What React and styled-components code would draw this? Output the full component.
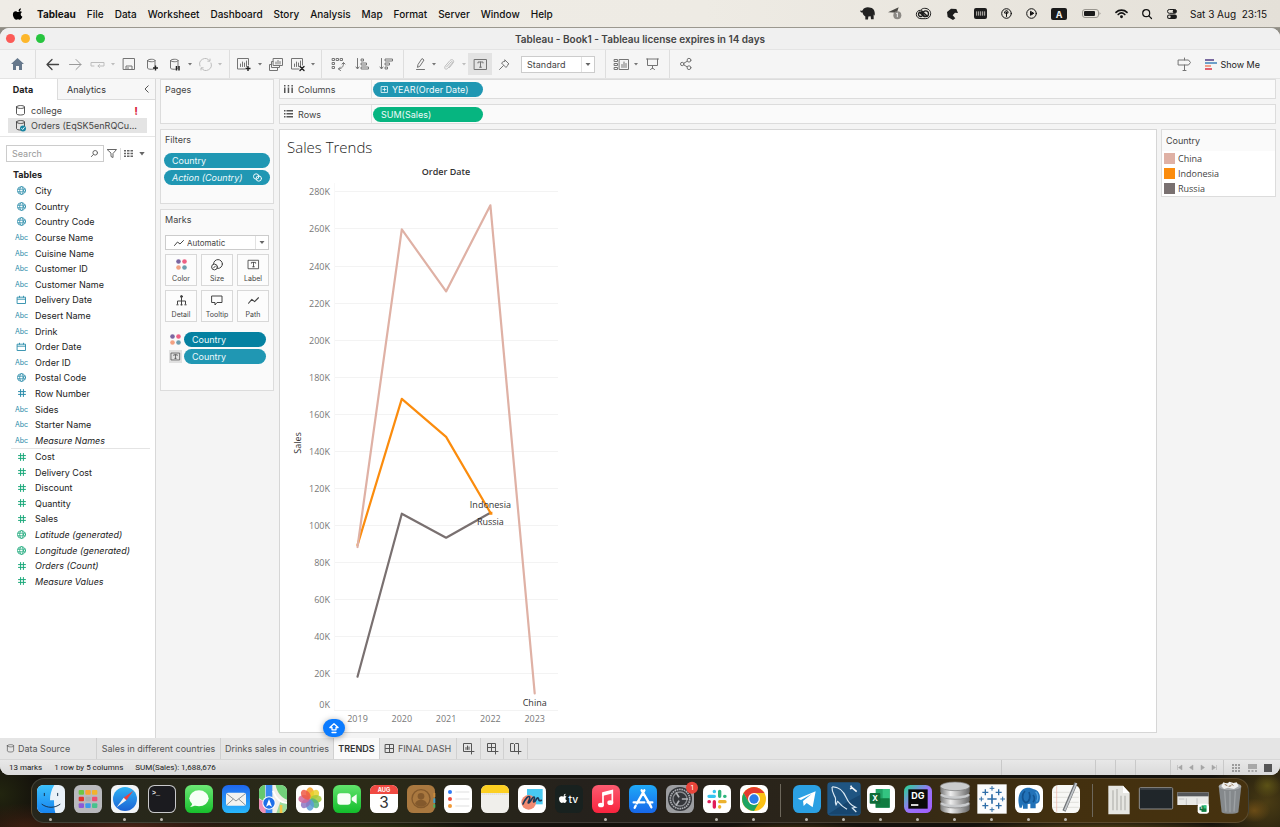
import React from "react";
import styled, { createGlobalStyle, css } from "styled-components";

const UI = `Inter, "Liberation Sans", sans-serif`;
const CHART = `"Open Sans", "Noto Sans", sans-serif`;

const GlobalStyle = createGlobalStyle`
  *, *::before, *::after { box-sizing: border-box; }
  body { margin: 0; font-family: ${UI}; font-size: 9px; color: #333; }
  button, input, select { font: inherit; color: inherit; }
  button { border: 0; padding: 0; background: none; cursor: pointer; }
  a { color: inherit; text-decoration: none; }
  ul { list-style: none; margin: 0; padding: 0; }
  h1, h2, h3 { margin: 0; font-size: inherit; font-weight: inherit; }
  svg { display: block; flex: none; overflow: visible; }
`;

/* ---------- desktop ---------- */

const Desktop = styled.div`
  display: flex;
  flex-direction: column;
  min-height: 100vh;
  background:
    linear-gradient(#8f8c84 0 60px, transparent 60px),
    radial-gradient(60px 24px at 2% 100%, #3a1e10, transparent),
    radial-gradient(40px 40px at 0% 96%, #22250f, transparent),
    radial-gradient(140px 14px at 10% 100%, #4a2416, transparent),
    radial-gradient(180px 16px at 26% 101%, #4a5a14, transparent),
    radial-gradient(90px 14px at 62% 101%, #5a4412, transparent),
    radial-gradient(160px 16px at 86% 101%, #7a5e18, transparent),
    radial-gradient(14px 12px at 99% 95%, #5c5216, transparent),
    radial-gradient(16px 12px at 98% 98%, #6b4c16, transparent),
    radial-gradient(60px 60px at 99% 97%, #4a3c14, transparent),
    #14110c;
`;

const MenuBar = styled.header`
  display: flex;
  align-items: center;
  height: 28px;
  padding: 0 13px 0 12px;
  background: linear-gradient(90deg, #efece6, #eeebe4 55%, #e4e0d8);
  border-bottom: 1px solid #9b988f;
  color: #111;
  font-size: 10px;
`;

const MenuList = styled.nav`
  display: flex;
  align-items: center;
  gap: 11px;
`;

const MenuItem = styled.button`
  font-family: ${UI};
  font-size: 10px;
  font-weight: ${(p) => (p.$bold ? 700 : 500)};
  white-space: nowrap;

  &:first-child { margin-right: 2px; }
`;

const StatusArea = styled.div`
  display: flex;
  align-items: center;
  margin-left: auto;
`;

const StatusSlot = styled.button`
  display: flex;
  justify-content: center;
  align-items: center;
  width: ${(p) => p.$w}px;
`;

const Clock = styled.time`
  margin-left: 6px;
  font-size: 10px;
  font-weight: 400;
  white-space: pre;
`;

const Window = styled.main`
  flex: 1;
  display: flex;
  flex-direction: column;
  background: #f4f4f4;
  border-radius: 9px;
  overflow: hidden;
`;

const TitleBar = styled.div`
  position: relative;
  display: flex;
  align-items: center;
  justify-content: center;
  height: 22px;
  background: #f0f0f0;
  border-bottom: 1px solid #e4e4e4;
`;

const Lights = styled.div`
  position: absolute;
  left: 6px;
  display: flex;
  gap: 6px;
`;

const Light = styled.button`
  width: 9px;
  height: 9px;
  border-radius: 50%;
  background: ${(p) => p.$c};
`;

const WindowTitle = styled.h1`
  font-size: 10px;
  line-height: 12px;
  font-weight: 600;
  color: #444;
`;

/* ---------- toolbar ---------- */

const Toolbar = styled.div`
  display: flex;
  height: 29px;
  background: #f5f5f5;
  border-bottom: 1px solid #e3e3e3;
`;

const ToolGroup = styled.div`
  display: flex;
  align-items: center;
  padding: 0 ${(p) => p.$pr || 0}px 0 ${(p) => p.$pl || 0}px;
  ${(p) => !p.$last && css`border-right: 1px solid #dedede;`}
`;

const ToolButton = styled.button`
  display: flex;
  align-items: center;
  justify-content: center;
  width: ${(p) => p.$w || 24}px;
  height: 22px;
  color: ${(p) => (p.$off ? "#bdbdbd" : "#747474")};
  background: ${(p) => (p.$on ? "#e3e3e3" : "transparent")};
`;

const ToolEnd = styled.div`
  display: flex;
  align-items: center;
  margin-left: auto;
  padding-right: 20px;
`;

const ShowMe = styled.button`
  display: flex;
  align-items: center;
  gap: 3px;
  margin-left: 9px;
  color: #222;
  font-size: 9px;
`;

const SelectBox = styled.label`
  display: flex;
  align-items: center;
  position: relative;
  width: ${(p) => p.$w};
  height: ${(p) => p.$h}px;
  margin-left: ${(p) => p.$ml || 0}px;
  background: #fff;
  border: 1px solid #ccc;
  color: #444;

  select {
    flex: 1;
    min-width: 0;
    height: 100%;
    padding: 0 0 0 ${(p) => p.$pad}px;
    border: 0;
    outline: 0;
    background: transparent;
    appearance: none;
    font-size: ${(p) => p.$fs}px;
  }
  > svg:last-child {
    padding: 0 3px;
    width: 13px;
    height: 100%;
    border-left: 1px solid #e2e2e2;
    pointer-events: none;
  }
  > svg:first-child {
    margin-left: 8px;
  }
`;

/* ---------- work area ---------- */

const Body = styled.div`
  flex: 1;
  display: flex;
`;

const DataPane = styled.aside`
  width: 156px;
  flex: none;
  background: #fff;
  border-right: 1px solid #d8d8d8;
`;

const PaneTabs = styled.div`
  display: flex;
  height: 21px;
`;

const PaneTab = styled.button`
  font-size: 9px;
  width: ${(p) => p.$w}px;
  color: #333;
  ${(p) =>
    p.$active
      ? css`font-weight: 700; color: #222; padding-right: 11px;`
      : css`background: #f7f7f7; border-bottom: 1px solid #dcdcdc;`}
  ${(p) => p.$first && css`border-left: 1px solid #dcdcdc;`}
`;

const SourceList = styled.ul`
  padding: 3px 8px 3px;
  border-bottom: 1px solid #e6e6e6;
`;

const Source = styled.li`
  display: flex;
  align-items: center;
  gap: 6px;
  height: 15px;
  padding-left: 8px;
  font-size: 9px;
  color: #444;
  background: ${(p) => (p.$active ? "#e4e4e4" : "transparent")};

  b {
    margin-left: auto;
    padding-right: 9px;
    color: #d8203a;
    font-size: 11px;
  }
`;

const SearchRow = styled.div`
  display: flex;
  align-items: center;
  gap: 4px;
  padding: 8px 8px 0 6px;
  color: #666;
`;

const SearchBox = styled.label`
  display: flex;
  align-items: center;
  width: 98px;
  height: 17px;
  padding: 0 5px;
  border: 1px solid #ccc;

  input {
    flex: 1;
    min-width: 0;
    padding: 0;
    border: 0;
    outline: 0;
    background: none;
    font-size: 9px;
  }
  input::placeholder { color: #999; }
`;

const IconButton = styled.button`
  display: flex;
  align-items: center;
  justify-content: center;
  width: ${(p) => p.$w || 16}px;
  height: 12px;
  ${(p) => p.$div && css`border-left: 1px solid #ddd; padding-left: 3px;`}
`;

const PaneHeading = styled.h2`
  margin: 7px 0 3px 13px;
  line-height: 11px;
  font-size: 9px;
  font-weight: 700;
  color: #222;
`;

const FieldList = styled.ul`
  display: grid;
  grid-auto-rows: 1fr;
  height: ${(p) => p.$h}px;
  margin: 0 5px 0 11px;
  ${(p) => p.$ruled && css`border-top: 1px solid #e4e4e4;`}
`;

const Field = styled.li`
  display: grid;
  grid-template-columns: 21px 1fr;
  align-items: center;
  column-gap: 3px;
  font-size: 9px;
  color: #222;
  font-style: ${(p) => (p.$calc ? "italic" : "normal")};
  white-space: nowrap;
`;

const FieldIcon = styled.span`
  display: flex;
  justify-content: center;
  font-size: 7px;
  font-style: normal;
  color: ${(p) => (p.$measure ? "#1aa87a" : "#2a8caa")};
`;

const CardColumn = styled.div`
  display: flex;
  flex-direction: column;
  gap: 5px;
  width: 114px;
  margin: 0 5px 0 4px;
  flex: none;
`;

const Card = styled.section`
  min-height: ${(p) => p.$h}px;
  padding: 4px 3px;
  background: #fafafa;
  border: 1px solid #dcdcdc;
`;

const CardTitle = styled.h2`
  padding-left: 1px;
  line-height: 12px;
  font-size: 9px;
  color: #444;
`;

const Pill = styled.button`
  display: flex;
  align-items: center;
  justify-content: space-between;
  height: 15px;
  width: ${(p) => p.$w || "100%"};
  padding: 0 8px;
  border-radius: 8px;
  background: ${(p) => p.$bg || "#2097b3"};
  color: #eef9fb;
  font-size: 9px;
  font-style: ${(p) => (p.$calc ? "italic" : "normal")};
  white-space: nowrap;
`;

const FilterStack = styled.div`
  display: grid;
  gap: 2px;
  margin-top: 7px;
`;

const MarksBody = styled.div`
  padding: 9px 1px 0;
`;

const MarkGrid = styled.div`
  display: grid;
  grid-template-columns: repeat(3, 1fr);
  gap: 4px;
  margin: 4px 0 10px;
`;

const MarkButton = styled.button`
  display: flex;
  flex-direction: column;
  align-items: center;
  justify-content: space-between;
  height: 32px;
  padding: 4px 0 2px;
  background: #fcfcfc;
  border: 1px solid #d8d8d8;
  color: #444;
  font-size: 7px;
  line-height: 8px;
`;

const Encoding = styled.div`
  display: flex;
  align-items: center;
  gap: 2px;
  margin-bottom: 2px;
  padding: 0 3px 0 4px;
`;

const EncodingIcon = styled.span`
  display: flex;
  align-items: center;
  justify-content: center;
  width: 13px;
  height: 13px;
  flex: none;
  background: ${(p) => (p.$boxed ? "#e0e0e0" : "transparent")};
  color: #444;
`;

const Sheet = styled.div`
  flex: 1;
  min-width: 0;
  display: flex;
  flex-direction: column;
  gap: 5px;
  padding: 0 4px 5px 0;
`;

const Shelf = styled.div`
  display: flex;
  align-items: center;
  height: 20px;
  flex: none;
  background: #fafafa;
  border: 1px solid #dcdcdc;
`;

const ShelfName = styled.div`
  display: flex;
  align-items: center;
  gap: 5px;
  width: 92px;
  height: 100%;
  margin-right: 1px;
  padding-left: 4px;
  border-right: 1px solid #e2e2e2;
  color: #444;
  font-size: 9px;
`;

const PillText = styled.span`
  display: flex;
  align-items: center;
  gap: 4px;
`;

const Views = styled.div`
  flex: 1;
  display: flex;
  align-items: flex-start;
  gap: 4px;
`;

const Worksheet = styled.section`
  position: relative;
  align-self: stretch;
  flex: 1;
  padding: 7px 0 0 7px;
  background: #fff;
  border: 1px solid #d6d6d6;
`;

const SheetTitle = styled.h2`
  margin-bottom: 2px;
  line-height: 20px;
  font-family: ${CHART};
  font-size: 15px;
  font-weight: 300;
  color: #222;
`;

const ChartSvg = styled.svg`
  margin-left: -7px;
  font-family: ${CHART};
`;

const UploadBadge = styled.button`
  position: absolute;
  left: 43px;
  bottom: -5px;
  display: flex;
  align-items: center;
  justify-content: center;
  width: 22px;
  height: 18px;
  border-radius: 9px;
  background: #0a7bff;
  color: #fff;
  box-shadow: 0 1px 6px rgba(0, 0, 0, 0.35);
`;

const Legend = styled.section`
  width: 115px;
  background: #fff;
  border: 1px solid #dcdcdc;

  h2 {
    height: 21px;
    padding-left: 4px;
    line-height: 21px;
    background: #fafafa;
    font-size: 9px;
    color: #444;
  }
`;

const LegendItem = styled.li`
  display: flex;
  align-items: center;
  gap: 3px;
  height: 15px;
  padding-left: 2px;
  font-family: ${CHART};
  font-size: 9px;
  color: #444;

  &::before {
    content: "";
    width: 11px;
    height: 11px;
    background: ${(p) => p.$c};
  }
`;

/* ---------- bottom bars ---------- */

const SheetTabs = styled.nav`
  display: flex;
  height: 22px;
  background: #e5e5e5;
  border-bottom: 1px solid #d6d6d6;
`;

const SheetTab = styled.a`
  display: flex;
  align-items: center;
  justify-content: ${(p) => (p.$start ? "flex-start" : "center")};
  gap: 4px;
  width: ${(p) => p.$w}px;
  padding-left: ${(p) => (p.$start ? 7 : 0)}px;
  border-right: 1px solid #d0d0d0;
  background: ${(p) => (p.$active ? "#fafafa" : "transparent")};
  color: ${(p) => (p.$active ? "#333" : "#555")};
  font-weight: ${(p) => (p.$active ? 600 : 400)};
  font-size: 9px;
  white-space: nowrap;
`;

const StatusBar = styled.footer`
  display: flex;
  align-items: center;
  gap: 12px;
  height: 15px;
  padding-left: 9px;
  background: linear-gradient(#e8e8e8, #dadada);
  color: #222;
  font-family: Roboto, ${UI};
  font-size: 8px;
`;

const StatusCells = styled.div`
  display: flex;
  align-items: stretch;
  height: 100%;
  margin-left: auto;
`;

const StatusCell = styled.div`
  display: flex;
  align-items: center;
  justify-content: space-evenly;
  width: ${(p) => p.$w}px;
  border-left: 1px solid #c9c9c9;
  color: #a4a4a4;
`;

/* ---------- dock ---------- */

const DockArea = styled.div`
  display: flex;
  justify-content: center;
  height: 52px;
  padding: 3px 0 4px;
`;

const DockBar = styled.div`
  display: flex;
  align-items: stretch;
  border: 1px solid rgba(255, 255, 255, 0.13);
  border-radius: 13px;
  background: linear-gradient(90deg, #26261c, #2b2a17 28%, #25211c 45%, #2a241a 62%, #43300f 85%, #46320f);
`;

const DockItem = styled.button`
  position: relative;
  display: flex;
  justify-content: center;
  align-items: flex-start;
  width: 37px;
  padding-top: 6px;

  &::after {
    content: "";
    position: absolute;
    bottom: 1px;
    width: 3px;
    height: 3px;
    border-radius: 50%;
    background: ${(p) => (p.$running ? "#bdbab2" : "transparent")};
  }
`;

const DockRule = styled.span`
  width: 1px;
  margin: 5px 7px 5px 8px;
  background: #6d675b;
`;

/* ---------- small drawings ---------- */

function Line({ w = 14, h = w, vb, sw = 1, children, fill = "none" }) {
  return (
    <svg width={w} height={h} viewBox={vb || `0 0 ${w} ${h}`} fill={fill} stroke="currentColor" strokeWidth={sw} strokeLinejoin="round" strokeLinecap="round" aria-hidden="true">
      {children}
    </svg>
  );
}

const Caret = ({ w = 4, h = 3 }) => (
  <svg width={w} height={h} viewBox="0 0 4 3" preserveAspectRatio="xMidYMid meet" aria-hidden="true">
    <path d="M0 0h4L2 2.600z" fill="currentColor" />
  </svg>
);

const SelectCaret = () => (
  <svg width="13" height="15" viewBox="0 0 6 4" aria-hidden="true">
    <path d="M.5.400h5L3 3.500z" fill="#666" />
  </svg>
);

const Plus = ({ x, y }) => <path d={`M${x - 2.5} ${y}h5M${x} ${y - 2.5}v5`} stroke="#222" strokeWidth="1.4" strokeLinecap="butt" />;
const Cyl = () => <path d="M1.500 2.500v7.500c0 1.700 7.500 1.700 7.500 0V2.500M1.500 2.500c0-1.700 7.500-1.700 7.500 0s-7.500 1.700-7.500 0z" />;
const Bars = () => <path d="M3.500 8.500V6M5.500 8.500V4M7.500 8.500V5M9.500 8.500V3" />;

const HomeIcon = () => (
  <svg width="13" height="12" viewBox="0 0 13 12"><path d="M6.500 0 0 6h2v6h3V8h3v4h3V6h2z" fill="#66788c" /></svg>
);
const BackIcon = () => <Line w={13} h={11} sw={1.300}><path d="M12.500 5.500H1M6 .5l-5 5 5 5" stroke="#444" /></Line>;
const ForwardIcon = () => <Line w={13} h={11}><path d="M.5 5.500H12M7 .5l5 5-5 5" stroke="#999" /></Line>;
const ReplayIcon = () => <Line w={15} h={8}><path d="M4 6H1V2.500h13V6H8M9.500 4.500 8 6l1.500 1.500" /></Line>;
const SaveIcon = () => <Line w={12}><path d="M.5.5h11v11H.5zM3 11.500V8h6v3.500M5 9.500v2" /></Line>;
const NewDbIcon = () => <Line w={13}><Cyl /><Plus x={9.500} y={10} /></Line>;
const PauseDbIcon = () => <Line w={13}><Cyl /><path d="M7.500 8v4.500M10 8v4.500" stroke="#222" strokeWidth="1.500" strokeLinecap="butt" /></Line>;
const RefreshIcon = () => <Line w={13}><path d="M1 8A5.500 5.500 0 0 1 10.500 2.700M12 5A5.500 5.500 0 0 1 2.500 10.300M8.800 3.200h2.200V1M4.200 9.800H2V12" /></Line>;
const NewSheetIcon = () => <Line w={14} h={13}><path d="M8 11H.5V.5h11V7" /><Bars /><Plus x={11} y={10.500} /></Line>;
const DuplicateIcon = () => <Line w={14} h={13}><path d="M4.500.5h9v7h-9zM4 3.500H2.500v6h8V8M2 6.500H.5v6h8V10M7 6V4M9 6V2.500M11 6V3.500" /></Line>;
const ClearIcon = () => <Line w={14} h={13}><path d="M8 11H.5V.5h11V7" /><Bars /><path d="m9 8.500 4 4M13 8.500l-4 4" stroke="#222" strokeWidth="1.400" /></Line>;
const SwapIcon = () => <Line w={13}><path d="M.5.5h2v2h-2zM4.500.5h2v2h-2zM8.500.5h2v2h-2zM.5 4.500h2v2h-2zM.5 8.500h2v2h-2zM11.500 5c0 4-1.500 5.500-5 6M8.500 9l-2 2 2 1.500M10 6l1.500-1.500L13 6" /></Line>;
const SortAscIcon = () => <Line w={13} h={12}><path d="M1.500.5v10M0 9l1.500 2L3 9M5.500 1h2v2h-2zM5.500 5h5v2h-5zM5.500 9h7v2h-7z" /></Line>;
const SortDescIcon = () => <Line w={13} h={12}><path d="M1.500.5v10M0 9l1.500 2L3 9M5.500 1h7v2h-7zM5.500 5h4v2h-4zM5.500 9h2v2h-2z" /></Line>;
const PenIcon = () => <Line w={9} h={12}><path d="m1.500 9 .5-2.500L6 .5l2 1.500-4 6zM.5 11.500h8" /></Line>;
const ClipIcon = () => <Line w={10} h={11}><path d="m2.500 8 4.500-5c1-1 2 0 1.300 1L4 9c-2 2.500-4.500.5-2.700-2L6 1.500C8-.5 11 1.500 9 4L5.500 8.500" /></Line>;
const TextIcon = ({ w = 13, h = 11 }) => <Line w={w} h={h} vb="0 0 13 11"><path d="M.5.5h12v10H.5zM4 4V3h5v1M6.500 3v5.200M5.500 8.200h2" /></Line>;
const PinIcon = () => <Line w={11}><path d="m6 1 4 4-1.200.5-.3 1.200L7 8.500 2.500 4l1.700-1.300 1.400-.3zM4.500 6.500l-4 4" /></Line>;
const CardsIcon = () => <Line w={15} h={11}><path d="M.5.5h3v2h-3zM.5 4.500h3v2h-3zM.5 8.500h3v2h-3zM5.500.5h9v10h-9zM8 8.500v-3M10 8.500V3M12 8.500V4.500" /></Line>;
const PresentIcon = () => <Line w={13} h={12}><path d="M.5 1h12M1.500 1v6.500h10V1M6.500 7.500v3M4.500 11.500l2-1.500 2 1.500" /></Line>;
const ShareIcon = () => <Line w={12}><circle cx="2.200" cy="6" r="1.700" /><circle cx="9" cy="2.200" r="1.900" /><circle cx="9" cy="9.700" r="1.900" /><path d="m3.800 5.200 3.500-2M3.800 6.900l3.500 2" /></Line>;
const GuideIcon = () => <Line w={13} h={13}><path d="M.5 2h10l2 2.500-2 2.500H.5zM6.500 0v2M6.500 7v5.500M5 12.500h3" /></Line>;
const ShowMeIcon = () => (
  <svg width="12" height="11" viewBox="0 0 12 11">
    <path d="M0 0h9v2H0z" fill="#7a6aa0" /><path d="M0 3h12v2H0z" fill="#6d9fc9" /><path d="M0 6h6v2H0z" fill="#f0a08a" /><path d="M0 9h7v2H0z" fill="#e06070" />
  </svg>
);
const DatabaseIcon = ({ ok, w = 9, h = 11 }) => (
  <Line w={w} h={h} vb="0 0 9 11" sw={0.900}>
    <path d="M.5 2v6.500c0 2 8 2 8 0V2M.5 2c0-2 8-2 8 0s-8 2-8 0z" />
    {ok && <><circle cx="7" cy="8.500" r="3" fill="#1a86a3" stroke="none" /><path d="m5.700 8.500 1 1 1.600-2" stroke="#fff" /></>}
  </Line>
);
const FunnelIcon = () => <Line w={10} h={9}><path d="M.5.5h9L6 4.500v4l-2-1v-3z" /></Line>;
const ListGridIcon = () => <svg width="9" height="7" viewBox="0 0 9 7" fill="currentColor"><path d="M0 0h2v1.500H0zM3 0h2.500v1.500H3zM6.500 0H9v1.500H6.500zM0 2.700h2v1.500H0zM3 2.700h2.500v1.500H3zM6.500 2.700H9v1.500H6.500zM0 5.400h2v1.500H0zM3 5.400h2.500v1.500H3zM6.500 5.400H9v1.500H6.500z" /></svg>;
const MagnifierIcon = () => <Line w={7} h={7}><circle cx="4.200" cy="2.800" r="2.300" /><path d="M2.400 4.500.4 6.600" /></Line>;

const FIELD_ICONS = {
  geo: <Line w={9} sw={0.800}><ellipse cx="4.500" cy="4.500" rx="4" ry="3.900" /><ellipse cx="4.500" cy="4.500" rx="1.800" ry="3.900" /><path d="M.7 3.200h7.600M.7 5.800h7.600" /></Line>,
  date: <Line w={9} h={8} sw={0.900}><path d="M.5 1.200h8v6.300h-8zM.5 3.200h8M2.500.2v1M6.500.2v1" /></Line>,
  num: <Line w={8} h={8} sw={1}><path d="M2.600.5v7M5.400.5v7M.5 2.600h7M.5 5.400h7" /></Line>,
  text: "Abc",
};

const ColorDots = () => (
  <svg width="11" height="11" viewBox="0 0 11 11">
    <circle cx="2.500" cy="2.500" r="2.300" fill="#7b66a0" /><circle cx="8.500" cy="2.500" r="2.300" fill="#ee6183" />
    <circle cx="2.500" cy="8.500" r="2.300" fill="#f3a283" /><circle cx="8.500" cy="8.500" r="2.300" fill="#6f9eaf" />
  </svg>
);
const TrendIcon = ({ w = 10, h = 6 }) => <Line w={w} h={h} vb="0 0 10 6"><path d="M.5 5.500 3.500 2l2.500 2L9.500.5" /></Line>;

/* ---------- dock drawings, on an 84-unit tile ---------- */

const Tile = ({ fill = "#fff", children }) => (
  <svg width="28" height="28" viewBox="0 0 84 84" aria-hidden="true">
    <rect width="84" height="84" rx="19" fill={fill} />
    {children}
  </svg>
);
const Grad = ({ id, a, b }) => (
  <linearGradient id={id} x1="0" y1="0" x2="0" y2="1"><stop stopColor={a} /><stop offset="1" stopColor={b} /></linearGradient>
);
const petals = ["#f6a01f", "#e9d12c", "#a3c93a", "#4fb67c", "#5b9bd6", "#8d76c2", "#d0679a", "#ee5a45"];
const sheetText = { fontFamily: UI, textAnchor: "middle" };

const Excel = ({ x = 0, y = 0, s = 1 }) => (
  <g transform={`translate(${x} ${y}) scale(${s})`}>
    <path d="M26 12h42v56H26z" fill="#21a366" /><path d="M47 12h21v28H47z" fill="#33c481" /><path d="M26 40h42v28H26z" fill="#107c41" />
    <rect x="8" y="24" width="32" height="32" rx="3" fill="#0f6b38" />
    <text x="24" y="48" fontSize="23" fontWeight="700" fill="#fff" {...sheetText}>X</text>
  </g>
);

const DOCK = [
  { name: "Finder", running: true, art: (
    <Tile fill="#e9f1f8"><defs><Grad id="fi" a="#3bc1fb" b="#1784f0" /></defs>
      <path d="M19 0h33c-9 14-13 30-13 46h12c0 15 1 27 4 38H19A19 19 0 0 1 0 65V19A19 19 0 0 1 19 0z" fill="url(#fi)" />
      <path d="M15 58c16 12 38 12 54 0M22 25v7M62 25v7" fill="none" stroke="#17344f" strokeWidth="3" strokeLinecap="round" /></Tile>) },
  { name: "Launchpad", art: (
    <Tile fill="#b9b9bd">{["#6cc644", "#f7a531", "#f2b32e", "#e0342c", "#a9abaf", "#ee4f74", "#8a5ad8", "#3d9bea", "#47c38c"].map((c, i) => <rect key={i} x={14 + (i % 3) * 20} y={15 + Math.floor(i / 3) * 20} width="16" height="14" rx="3" fill={c} />)}</Tile>) },
  { name: "Safari", running: true, art: (
    <Tile fill="#f2f4f6"><defs><Grad id="sa" a="#2fb3f4" b="#1b62d4" /></defs><circle cx="42" cy="42" r="36" fill="url(#sa)" />
      <path d="M67 17 46 46l-8-8z" fill="#f0413b" /><path d="M17 67l21-29 8 8z" fill="#f4f4f4" /></Tile>) },
  { name: "Terminal", running: true, art: (
    <Tile fill="#c9c9cb"><rect x="3" y="3" width="78" height="78" rx="16" fill="#1b1b1f" />
      <text x="12" y="30" fontSize="20" fontWeight="700" fill="#eee" fontFamily="Liberation Mono, monospace">&gt;_</text></Tile>) },
  { name: "Messages", art: (
    <Tile fill="url(#me)"><defs><Grad id="me" a="#6ce775" b="#17c02c" /></defs><ellipse cx="42" cy="40" rx="29" ry="24" fill="#f6fff6" /><path d="M22 53c0 6-3 9-7 12 7 0 13-2 17-6z" fill="#f6fff6" /></Tile>) },
  { name: "Mail", art: (
    <Tile fill="url(#ma)"><defs><Grad id="ma" a="#1f66ee" b="#28b8fb" /></defs><rect x="12" y="23" width="60" height="39" rx="6" fill="#f2f2f0" /><path d="m14 26 28 22 28-22M14 60l20-18M70 60 50 42" fill="none" stroke="#8c9499" strokeWidth="3" /></Tile>) },
  { name: "Maps", art: (
    <Tile fill="#f1efe8"><path d="M50 0h15a19 19 0 0 1 19 19v25C66 38 54 22 50 0z" fill="#72d07a" /><path d="M0 20A19 19 0 0 1 18 0v50L0 40z" fill="#65c86f" /><path d="M0 42l22 12v30h-3A19 19 0 0 1 0 65z" fill="#ef8fb8" /><path d="M84 50v15a19 19 0 0 1-19 19H52l12-34z" fill="#9bdca0" />
      <path d="M20 0h20v84H20z" fill="#3889f2" /><path d="M42 18c10 26 24 36 42 36" stroke="#fff" strokeWidth="6" fill="none" /><path d="M66 60v24" stroke="#f5c445" strokeWidth="8" />
      <circle cx="30" cy="54" r="20" fill="#fff" /><circle cx="30" cy="54" r="17" fill="#1f6fe8" /><path d="m30 42 9 23-9-5-9 5z" fill="#fff" /></Tile>) },
  { name: "Photos", art: (
    <Tile>{petals.map((c, i) => <ellipse key={c} cx="42" cy="24" rx="12" ry="17" fill={c} opacity="0.85" transform={`rotate(${i * 45} 42 42)`} />)}</Tile>) },
  { name: "FaceTime", art: (
    <Tile fill="url(#fa)"><defs><Grad id="fa" a="#61e36c" b="#12bd2b" /></defs><rect x="13" y="25" width="40" height="34" rx="9" fill="#f6fff6" /><path d="m56 38 15-10v28L56 46z" fill="#f6fff6" /></Tile>) },
  { name: "Calendar", art: (
    <Tile><path d="M0 27v-8A19 19 0 0 1 19 0h46a19 19 0 0 1 19 19v8z" fill="#f04a42" />
      <text x="42" y="21" fontSize="17" fontWeight="700" fill="#fff" {...sheetText}>AUG</text>
      <text x="42" y="70" fontSize="46" fill="#333" {...sheetText}>3</text></Tile>) },
  { name: "Contacts", art: (
    <Tile fill="#a9783f"><path d="M79 24h6v12h-6z" fill="#c98b3c" /><path d="M79 40h6v14h-6z" fill="#3f9fc8" /><path d="M79 58h6v10h-6z" fill="#48b760" /><circle cx="42" cy="41" r="27" fill="none" stroke="#83592c" strokeWidth="4" /><circle cx="42" cy="34" r="10" fill="#83592c" /><path d="M24 56c4-16 32-16 36 0-10 12-26 12-36 0z" fill="#83592c" /></Tile>) },
  { name: "Reminders", art: (
    <Tile>{["#2f7bf6", "#ee4b3e", "#f19a37"].map((c, i) => <g key={c}><circle cx="18" cy={21 + i * 21} r="6" fill={c} /><path d={`M34 ${21 + i * 21}h42`} stroke="#cfcfcf" strokeWidth="2" /></g>)}</Tile>) },
  { name: "Notes", art: (
    <Tile fill="#f0efeb"><path d="M0 24v-5A19 19 0 0 1 19 0h46a19 19 0 0 1 19 19v5z" fill="#fccf21" /><path d="M2 27h80" stroke="#b8b3a5" strokeWidth="2" strokeDasharray="3 3" /></Tile>) },
  { name: "Freeform", art: (
    <Tile><path d="M27 12h47v46H27z" fill="#48c9f2" /><circle cx="32" cy="52" r="22" fill="#f28a70" /><path d="M15 57c8-18 17-26 20-21s-8 19-3 18 11-20 16-18-5 15 0 15 8-15 12-12-1 10 10 7" fill="none" stroke="#1d3b5a" strokeWidth="5" strokeLinecap="round" /></Tile>) },
  { name: "TV", art: (
    <Tile fill="#18211f"><g transform="translate(12 26) scale(0.900)"><AppleShape /></g><text x="55" y="53" fontSize="31" fontWeight="500" fill="#fff" {...sheetText}>tv</text></Tile>) },
  { name: "Music", running: true, art: (
    <Tile fill="url(#mu)"><defs><Grad id="mu" a="#fb5b70" b="#f9233e" /></defs><path d="M33 59V24l28-7v35" fill="none" stroke="#fff" strokeWidth="5" /><path d="M31 24l32-8v9l-32 8z" fill="#fff" /><ellipse cx="27" cy="60" rx="9" ry="7" fill="#fff" /><ellipse cx="55" cy="53" rx="9" ry="7" fill="#fff" /></Tile>) },
  { name: "App Store", art: (
    <Tile fill="url(#ap)"><defs><Grad id="ap" a="#1fa9f7" b="#1767ea" /></defs><path d="M46 16 24 55M38 16l25 43 4 8M14 52h32M56 52h14M20 62l-3 6" stroke="#fff" strokeWidth="7" strokeLinecap="round" fill="none" /></Tile>) },
  { name: "System Settings", art: (
    <Tile fill="#9c9da0"><circle cx="42" cy="42" r="36" fill="#34363a" /><circle cx="42" cy="42" r="29" fill="none" stroke="#a9abb0" strokeWidth="5" strokeDasharray="5 2" /><circle cx="42" cy="42" r="21" fill="none" stroke="#8a8c91" strokeWidth="4" /><path d="M42 42h24M42 42 30 22M42 42 30 62" stroke="#b4b6ba" strokeWidth="5" /><circle cx="42" cy="42" r="6" fill="#34363a" />
      <circle cx="78" cy="8" r="18" fill="#e8443a" /><text x="78" y="15" fontSize="20" fill="#fff" {...sheetText}>1</text></Tile>) },
  { name: "Slack", running: true, art: (
    <Tile><g strokeWidth="10" strokeLinecap="round" fill="none"><path d="M34 19v1M18 34h16" stroke="#36c5f0" /><path d="M50 19v15M65 34h1" stroke="#2eb67d" /><path d="M50 50h16M50 65v1" stroke="#ecb22e" /><path d="M34 50v16M18 50h1" stroke="#e01e5a" /></g></Tile>) },
  { name: "Chrome", running: true, art: (
    <Tile><circle cx="42" cy="42" r="36" fill="#fbc116" /><path d="M11 24a36 36 0 0 1 62 0H42L26 51z" fill="#e33b2e" /><path d="M11 24a36 36 0 0 0 31 54l16-27-16 9-16-9z" fill="#1da462" /><circle cx="42" cy="42" r="18" fill="#fff" /><circle cx="42" cy="42" r="14" fill="#2b7de9" /></Tile>) },
  null,
  { name: "Telegram", running: true, art: (
    <Tile fill="#2ba0e3"><path d="M14 41 68 19 59 67 41 54l-9 9-2-15 26-21-32 18z" fill="#fff" /></Tile>) },
  { name: "MySQL Workbench", running: true, art: (
    <svg width="28" height="28" viewBox="0 0 84 84" aria-hidden="true"><rect x="-8" y="-8" width="100" height="100" rx="10" fill="#1f5582" /><path d="M-6 88C22 70 50 50 90 30v58z" fill="#17466f" />
      <path d="M6 6c18-2 34 12 43 32 6 14 12 22 28 29l-10 2 12 12M6 6c-1 15 5 22 10 32 3 9-3 14 2 22 3-5 2-8 5-11 10 12 17 18 28 24" fill="none" stroke="#dbe9f3" strokeWidth="3.500" /><path d="m66 8 14 12M62 2l4 7-6 2" stroke="#f0f4f8" strokeWidth="5" fill="none" /></svg>) },
  { name: "Excel", running: true, art: <Tile><Excel /></Tile> },
  { name: "DataGrip", running: true, art: (
    <Tile fill="url(#dg)"><defs><linearGradient id="dg" x1="0" y1="0" x2="1" y2="1"><stop stopColor="#22d88f" /><stop offset="0.500" stopColor="#9775f8" /><stop offset="1" stopColor="#a45cff" /></linearGradient></defs><rect x="13" y="13" width="58" height="58" fill="#0a0a0a" /><text x="42" y="42" fontSize="27" fontWeight="700" fill="#fff" {...sheetText}>DG</text><path d="M21 60h22" stroke="#fff" strokeWidth="5" /></Tile>) },
  { name: "Database", running: true, art: (
    <svg width="28" height="28" viewBox="0 0 84 84" aria-hidden="true"><defs><linearGradient id="db"><stop stopColor="#777" /><stop offset="0.350" stopColor="#eee" /><stop offset="1" stopColor="#666" /></linearGradient></defs>
      {[56, 30, 4].map((y) => <g key={y}><path d={`M-2 ${y}v16c0 18 88 18 88 0V${y}z`} fill="url(#db)" /><ellipse cx="42" cy={y} rx="44" ry="13" fill="#c9cbcd" stroke="#777" strokeWidth="2" /></g>)}</svg>) },
  { name: "Tableau", running: true, art: (
    <svg width="28" height="28" viewBox="0 0 84 84" aria-hidden="true"><rect x="-2" y="-2" width="88" height="88" fill="#fbfcfd" />
      <g stroke="#2f6ea8" fill="none"><path d="M42 28v28M28 42h28" strokeWidth="5" />
        {[[42, 10], [42, 74], [10, 42], [74, 42]].map(([x, y]) => <path key={`${x}${y}`} d={`M${x - 7} ${y}h14M${x} ${y - 7}v14`} strokeWidth="3" />)}
        {[[22, 22], [62, 22], [22, 62], [62, 62]].map(([x, y]) => <path key={`${x}${y}`} d={`M${x - 9} ${y}h18M${x} ${y - 9}v18`} strokeWidth="4" />)}</g></svg>) },
  { name: "Postgres", running: true, art: (
    <Tile><path d="M14 68C8 50 8 26 24 13c14-8 24-4 30-1 16 2 24 16 20 34-1 7-6 10-12 10v14H46V56l-8 1v14H24V58l-4 10z" fill="#2272b8" /><path d="M30 18c-10 10-10 28 2 35 12-2 16-18 10-32M54 30c6 6 5 16 0 22" fill="none" stroke="#135390" strokeWidth="5" /><path d="M62 20c8 8 8 22 3 30" fill="none" stroke="#4fa0de" strokeWidth="4" /></Tile>) },
  { name: "TextEdit", running: true, art: (
    <Tile fill="#f8f8f6"><path d="M4 22h76M4 37h76M4 52h76M4 67h76" stroke="#d4d4d0" strokeWidth="2" /><path d="M14 4v76" stroke="#eeb0a4" strokeWidth="2" /><path d="M36 78 72-6" stroke="#6e7276" strokeWidth="10" /><path d="M38 76 73-6" stroke="#c4c8cc" strokeWidth="5" /></Tile>) },
  null,
  { name: "Archive", art: (
    <svg width="28" height="28" viewBox="0 0 84 84" aria-hidden="true"><path d="M10 2h44l20 22v64H10z" fill="#e6e6e2" /><path d="M54 2v22h20z" fill="#fff" /><path d="M24 16v60M36 12v64M48 32v44M60 32v44" stroke="#c2c2be" strokeWidth="5" /></svg>) },
  { name: "Terminal window", art: (
    <svg width="34" height="28" viewBox="0 0 102 84" aria-hidden="true"><rect x="1" y="8" width="100" height="64" rx="3" fill="#20262a" stroke="#8d8d8d" strokeWidth="3" /><path d="M4 12h94" stroke="#3d4246" strokeWidth="5" /></svg>) },
  { name: "Workbook window", art: (
    <svg width="32" height="28" viewBox="0 0 96 84" aria-hidden="true"><path d="M1 22h94v38H1z" fill="#e9e9e7" /><path d="M1 22h94v12H1z" fill="#55575a" /><path d="M28 40v20M60 40v20M6 42h16" stroke="#c4c4c4" strokeWidth="3" /><rect x="62" y="56" width="34" height="30" rx="7" fill="#fff" /><Excel x={65} y={57} s={0.34} /></svg>) },
  { name: "Trash", art: (
    <svg width="28" height="28" viewBox="0 0 84 84" aria-hidden="true"><path d="M8 4h68l-9 78c-8 6-42 6-50 0z" fill="#85898c" /><path d="M26 18l4 62M42 18v64M58 18l-4 62" stroke="#9da1a4" strokeWidth="4" /><ellipse cx="42" cy="4" rx="34" ry="11" fill="#a9acae" /><path d="m16 4 6-12 12 4 6-6 12 4 10-2 6 12-14 8-18-4-12 4z" fill="#efefed" /><path d="m26-2 8 4M46-4l6 6M38 4l8-2" stroke="#8a6a4a" strokeWidth="3" /></svg>) },
];

function AppleShape() {
  return <path fill="#fff" d="M19 7c2-2 3-4 2.800-7-2.600.2-6 2.300-6.200 7 1.200.2 2.400-.1 3.400 0zM25 10c-2-2-6-3-9-1-2 1-3 1-5 0C6 6.500 0 10 0 17c0 7 5 14 9 14 2 0 3-1.300 5-1.300S17 31 19 31c3 0 6-5 7-8-6-3-6-10-1-13z" />;
}

/* ---------- data ---------- */

const MENUS = ["File", "Data", "Worksheet", "Dashboard", "Story", "Analysis", "Map", "Format", "Server", "Window", "Help"];

const DIMENSIONS = [
  ["City", "geo"], ["Country", "geo"], ["Country Code", "geo"], ["Course Name", "text"], ["Cuisine Name", "text"],
  ["Customer ID", "text"], ["Customer Name", "text"], ["Delivery Date", "date"], ["Desert Name", "text"], ["Drink", "text"],
  ["Order Date", "date"], ["Order ID", "text"], ["Postal Code", "geo"], ["Row Number", "num"], ["Sides", "text"],
  ["Starter Name", "text"], ["Measure Names", "text", true],
];
const MEASURES = [
  ["Cost", "num"], ["Delivery Cost", "num"], ["Discount", "num"], ["Quantity", "num"], ["Sales", "num"],
  ["Latitude (generated)", "geo", true], ["Longitude (generated)", "geo", true], ["Orders (Count)", "num", true], ["Measure Values", "num", true],
];

const YEARS = [2019, 2020, 2021, 2022, 2023];
const SERIES = [
  { name: "China", color: "#dfb1a5", values: [88, 259.500, 226, 272.500, 9] },
  { name: "Indonesia", color: "#fb8c0d", values: [89, 168, 147.500, 106.500] },
  { name: "Russia", color: "#797070", values: [18, 106, 93, 106.500] },
];
const DRAW_ORDER = [SERIES[2], SERIES[1], SERIES[0]];
const px = (i) => 77.5 + i * 44.3;
const py = (k) => 551 - k * 1.852;

function TrendChart() {
  const ticks = Array.from({ length: 15 }, (_, i) => i * 20);
  return (
    <ChartSvg width="290" height="572" role="img" aria-label="Sales by order date">
      <text x="166" y="16" textAnchor="middle" fontSize="9" fontWeight="600" fill="#333">Order Date</text>
      {ticks.map((t) => (
        <g key={t}>
          <path d={`M54 ${Math.round(py(t)) + 0.5}H278`} stroke="#f3f3f3" />
          <text x="50" y={Math.round(py(t)) + (t ? 4 : -2)} textAnchor="end" fontSize="9" fill="#777">{t}K</text>
        </g>
      ))}
      <path d="M54.500 24v527" stroke="#f8f8f8" />
      {YEARS.map((y, i) => (
        <text key={y} x={px(i)} y="563" textAnchor="middle" fontSize="9" fill="#777">{y}</text>
      ))}
      <text transform="translate(21 284) rotate(-90)" textAnchor="middle" fontSize="9" fill="#333">Sales</text>
      {DRAW_ORDER.map((s) => (
        <polyline key={s.name} fill="none" stroke={s.color} strokeWidth="2.200" strokeLinejoin="round" strokeLinecap="round"
          points={s.values.map((v, i) => `${px(i)},${py(v)}`).join(" ")} />
      ))}
      <rect x={px(3) - 1} y={py(106.5) - 1} width="3" height="3" fill="#fb8c0d" />
      <g fontSize="9" fill="#333" textAnchor="middle">
        <text x={px(3)} y="349">Indonesia</text>
        <text x={px(3)} y="366">Russia</text>
        <text x={px(4)} y="547">China</text>
      </g>
    </ChartSvg>
  );
}

/* ---------- sections ---------- */

function SystemMenu() {
  return (
    <MenuBar>
      <MenuList aria-label="Menu bar">
        <MenuItem aria-label="Apple menu">
          <svg width="12" height="12" viewBox="0 -1 28 33"><g style={{ filter: "brightness(0)" }}><AppleShape /></g></svg>
        </MenuItem>
        <MenuItem $bold>Tableau</MenuItem>
        {MENUS.map((m) => <MenuItem key={m}>{m}</MenuItem>)}
      </MenuList>
      <StatusArea>
        <StatusSlot $w={30} aria-label="Postgres"><svg width="15" height="13" viewBox="0 0 45 38"><path d="M0 9c3 2 5 2 8 0C12 0 24-1 32 2c10 2 14 12 12 24l-3-4v14h-8l-1-9-7 1-1 9h-8v-9c-6-4-8-8-8-12C4 17 1 14 0 9z" fill="#222" /></svg></StatusSlot>
        <StatusSlot $w={26} aria-label="Updates"><svg width="14" height="13" viewBox="0 0 42 38"><path d="M0 15 32 0l-7 22-8-6z" fill="#4c4a46" /><circle cx="28" cy="24" r="12" fill="#8c8984" /><path d="M28 17v13M25 20l3-3" stroke="#eee" strokeWidth="3" /></svg></StatusSlot>
        <StatusSlot $w={30} aria-label="Creative Cloud"><svg width="15" height="11" viewBox="0 0 45 33"><path d="M26 1c11 0 18 7 18 16s-7 15-15 15H15C7 32 1 26 1 19S7 6 14 7c2-4 7-6 12-6z" fill="none" stroke="#1d1d1d" strokeWidth="3" /><path d="m11 13 14 12M17 9l16 15" stroke="#1d1d1d" strokeWidth="5" strokeLinecap="round" /><circle cx="14" cy="19" r="6.500" fill="none" stroke="#1d1d1d" strokeWidth="4" /><circle cx="29" cy="17" r="8.500" fill="none" stroke="#1d1d1d" strokeWidth="4" /></svg></StatusSlot>
        <StatusSlot $w={28} aria-label="Toolbox"><svg width="11" height="12" viewBox="0 0 33 36"><path d="M0 12 12 2l16 1 5 12-9-1-7 8 8 9-7 5L2 27z" fill="#1d1d1d" /></svg></StatusSlot>
        <StatusSlot $w={28} aria-label="Memory"><svg width="13" height="11" viewBox="0 0 39 33"><rect width="39" height="33" rx="6" fill="#1d1d1d" /><path d="M8 10v13M14 10v13M20 10v13M26 10v13M32 10v13" stroke="#dedbd4" strokeWidth="2.500" /></svg></StatusSlot>
        <StatusSlot $w={24} aria-label="Password"><Line w={11}><circle cx="5.500" cy="5.500" r="4.800" /><path d="M5.500 8.500V4M4 3.500l1.500-1L7 3.500v1.600H4z" /></Line></StatusSlot>
        <StatusSlot $w={26} aria-label="Play"><Line w={11}><circle cx="5.500" cy="5.500" r="4.800" /><path d="M4.500 3.700v3.600l3-1.800z" fill="currentColor" /></Line></StatusSlot>
        <StatusSlot $w={30} aria-label="Input source"><svg width="16" height="12" viewBox="0 0 16 12"><rect width="16" height="12" rx="2" fill="#1a1a1a" /><text x="8" y="9.500" fontSize="9" fontWeight="700" fill="#eee" textAnchor="middle">A</text></svg></StatusSlot>
        <StatusSlot $w={34} aria-label="Battery"><svg width="19" height="9" viewBox="0 0 19 9"><rect x=".5" y=".5" width="16" height="8" rx="2.500" fill="none" stroke="#99968f" /><rect x="2" y="2" width="11" height="5" rx="1" fill="#1a1a1a" /><path d="M17.500 3v3l1.200-1.500z" fill="#99968f" /></svg></StatusSlot>
        <StatusSlot $w={26} aria-label="Wi-Fi"><Line w={13} h={9} sw={1.700}><path d="M1 3.300c3-3 8-3 11 0M3.200 5.500c2-1.900 4.600-1.900 6.600 0" /><circle cx="6.500" cy="7.700" r=".6" fill="currentColor" /></Line></StatusSlot>
        <StatusSlot $w={25} aria-label="Search"><Line w={10} sw={1.200}><circle cx="4.200" cy="4.200" r="3.500" /><path d="m6.800 6.800 2.700 2.700" /></Line></StatusSlot>
        <StatusSlot $w={25} aria-label="Control Centre"><svg width="10" height="10" viewBox="0 0 10 10"><rect x=".5" y=".5" width="9" height="3.800" rx="1.900" fill="none" stroke="#1a1a1a" /><circle cx="7.500" cy="2.400" r="1.800" fill="#1a1a1a" /><rect y="5.500" width="10" height="4.500" rx="2.200" fill="#1a1a1a" /><circle cx="2.400" cy="7.750" r="1.300" fill="#e5e1d9" /></svg></StatusSlot>
        <Clock>Sat 3 Aug  23:15</Clock>
      </StatusArea>
    </MenuBar>
  );
}

const Tool = ({ label, children, ...rest }) => <ToolButton aria-label={label} {...rest}>{children}</ToolButton>;

function MainToolbar() {
  return (
    <Toolbar>
      <ToolGroup><Tool label="Home" $w={35}><HomeIcon /></Tool></ToolGroup>
      <ToolGroup $pl={4} $pr={5}>
        <Tool label="Undo"><BackIcon /></Tool>
        <Tool label="Redo" $w={22} $off><ForwardIcon /></Tool>
        <Tool label="Replay" $w={22} $off><ReplayIcon /></Tool>
        <Tool label="Replay options" $w={10} $off><Caret /></Tool>
        <Tool label="Save" $w={22}><SaveIcon /></Tool>
        <Tool label="New data source"><NewDbIcon /></Tool>
        <Tool label="Pause updates" $w={22}><PauseDbIcon /></Tool>
        <Tool label="Pause options" $w={8}><Caret /></Tool>
        <Tool label="Refresh" $w={22} $off><RefreshIcon /></Tool>
        <Tool label="Refresh options" $w={8} $off><Caret /></Tool>
      </ToolGroup>
      <ToolGroup $pl={2} $pr={3}>
        <Tool label="New worksheet"><NewSheetIcon /></Tool>
        <Tool label="New worksheet options" $w={8}><Caret /></Tool>
        <Tool label="Duplicate"><DuplicateIcon /></Tool>
        <Tool label="Clear" $w={20}><ClearIcon /></Tool>
        <Tool label="Clear options" $w={10}><Caret /></Tool>
      </ToolGroup>
      <ToolGroup $pl={4} $pr={5}>
        <Tool label="Swap"><SwapIcon /></Tool>
        <Tool label="Sort ascending"><SortAscIcon /></Tool>
        <Tool label="Sort descending"><SortDescIcon /></Tool>
      </ToolGroup>
      <ToolGroup $pl={6} $pr={10}>
        <Tool label="Highlight" $w={20}><PenIcon /></Tool>
        <Tool label="Highlight options" $w={8}><Caret /></Tool>
        <Tool label="Group" $w={22} $off><ClipIcon /></Tool>
        <Tool label="Group options" $w={8} $off><Caret /></Tool>
        <Tool label="Show labels" $on><TextIcon /></Tool>
        <Tool label="Fix axes"><PinIcon /></Tool>
        <SelectBox $w="74px" $h={17} $pad={5} $fs={9} $ml={5}>
          <select aria-label="Fit" defaultValue="Standard"><option>Standard</option></select>
          <SelectCaret />
        </SelectBox>
      </ToolGroup>
      <ToolGroup $pl={4} $pr={5}>
        <Tool label="Show cards" $w={22}><CardsIcon /></Tool>
        <Tool label="Card options" $w={8}><Caret /></Tool>
        <Tool label="Presentation mode"><PresentIcon /></Tool>
      </ToolGroup>
      <ToolGroup $pl={4} $last><Tool label="Share"><ShareIcon /></Tool></ToolGroup>
      <ToolEnd>
        <Tool label="Data guide"><GuideIcon /></Tool>
        <ShowMe><ShowMeIcon />Show Me</ShowMe>
      </ToolEnd>
    </Toolbar>
  );
}

const Fields = ({ items, measure, ...rest }) => (
  <FieldList {...rest}>
    {items.map(([name, kind, calc]) => (
      <Field key={name} $calc={calc}>
        <FieldIcon $measure={measure}>{FIELD_ICONS[kind]}</FieldIcon>
        {name}
      </Field>
    ))}
  </FieldList>
);

function DataPanel() {
  return (
    <DataPane>
      <PaneTabs>
        <PaneTab $active $w={57}>Data</PaneTab>
        <PaneTab $first $w={58}>Analytics</PaneTab>
        <PaneTab $w={40} aria-label="Collapse"><svg width="40" height="8" viewBox="0 0 40 8"><path d="M33.500.5 30 4l3.500 3.500" fill="none" stroke="#555" /></svg></PaneTab>
      </PaneTabs>
      <SourceList>
        <Source><DatabaseIcon />college<b>!</b></Source>
        <Source $active><DatabaseIcon ok />Orders (EqSK5enRQCu...</Source>
      </SourceList>
      <SearchRow>
        <SearchBox><input aria-label="Search fields" placeholder="Search" /><MagnifierIcon /></SearchBox>
        <IconButton aria-label="Filter fields" $w={8}><FunnelIcon /></IconButton>
        <IconButton aria-label="View as" $w={14} $div><ListGridIcon /></IconButton>
        <IconButton aria-label="View options" $w={12}><Caret w={6} h={4} /></IconButton>
      </SearchRow>
      <PaneHeading>Tables</PaneHeading>
      <Fields items={DIMENSIONS} $h={265} />
      <Fields items={MEASURES} measure $h={141} $ruled />
    </DataPane>
  );
}

const MARKS = [
  ["Color", <ColorDots />],
  ["Size", <Line w={12}><circle cx="7" cy="5" r="4.400" /><circle cx="3.500" cy="8" r="2.900" fill="#fcfcfc" /><path d="m2.500 9 2-2" /></Line>],
  ["Label", <TextIcon w={11} h={11} />],
  ["Detail", <Line w={11} h={11}><circle cx="5.500" cy="1.500" r="1" fill="currentColor" /><path d="M5.500 2v8M1.500 9V6h8v3M.8 9.800h1.400M4.800 9.800h1.400M8.800 9.800h1.400" /></Line>],
  ["Tooltip", <Line w={12} h={11}><path d="M1 1h10v6.500H6L4 10V7.500H1z" /></Line>],
  ["Path", <TrendIcon w={11} h={11} />],
];

function Cards() {
  return (
    <CardColumn>
      <Card $h={45}><CardTitle>Pages</CardTitle></Card>
      <Card $h={75}>
        <CardTitle>Filters</CardTitle>
        <FilterStack>
          <Pill>Country</Pill>
          <Pill $calc>Action (Country)<Line w={9}><circle cx="3.200" cy="3.500" r="2.700" /><circle cx="5.800" cy="5.500" r="2.700" /></Line></Pill>
        </FilterStack>
      </Card>
      <Card $h={182}>
        <CardTitle>Marks</CardTitle>
        <MarksBody>
          <SelectBox $w="100%" $h={15} $pad={3} $fs={8}>
            <TrendIcon />
            <select aria-label="Mark type" defaultValue="Automatic"><option>Automatic</option></select>
            <SelectCaret />
          </SelectBox>
          <MarkGrid>
            {MARKS.map(([name, icon]) => <MarkButton key={name}>{icon}{name}</MarkButton>)}
          </MarkGrid>
          <Encoding><EncodingIcon><ColorDots /></EncodingIcon><Pill $bg="#0581a1">Country</Pill></Encoding>
          <Encoding><EncodingIcon $boxed><TextIcon w={9} h={9} /></EncodingIcon><Pill>Country</Pill></Encoding>
        </MarksBody>
      </Card>
    </CardColumn>
  );
}

function SheetArea() {
  return (
    <Sheet>
      <Shelf>
        <ShelfName><svg width="9" height="8" viewBox="0 0 9 8" fill="#555"><path d="M0 0h1.500v1.500H0zM3.700 0h1.500v1.500H3.700zM7.400 0h1.500v1.500H7.400zM0 2.500h1.500V8H0zM3.700 2.500h1.500V8H3.700zM7.400 2.500h1.500V8H7.400z" /></svg>Columns</ShelfName>
        <Pill $w="110px"><PillText><Line w={7} sw={0.800}><path d="M.5.5h6v6h-6zM3.500 2v3M2 3.500h3" /></Line>YEAR(Order Date)</PillText></Pill>
      </Shelf>
      <Shelf>
        <ShelfName><svg width="9" height="8" viewBox="0 0 9 8" fill="#555"><path d="M0 0h1.500v1.500H0zM2.500 0H9v1.500H2.500zM0 3h1.500v1.500H0zM2.500 3H9v1.500H2.500zM0 6h1.500v1.500H0zM2.500 6H9v1.500H2.500z" /></svg>Rows</ShelfName>
        <Pill $w="110px" $bg="#06b580">SUM(Sales)</Pill>
      </Shelf>
      <Views>
        <Worksheet>
          <SheetTitle>Sales Trends</SheetTitle>
          <TrendChart />
          <UploadBadge aria-label="Upload"><Line w={10} h={11} sw={1.300}><path d="M5 .8.900 4.500H3v2.300h4V4.500h2.100zM3 9.500h4" /></Line></UploadBadge>
        </Worksheet>
        <Legend>
          <h2>Country</h2>
          <ul>{SERIES.map((s) => <LegendItem key={s.name} $c={s.color}>{s.name}</LegendItem>)}</ul>
        </Legend>
      </Views>
    </Sheet>
  );
}

function BottomBars() {
  return (
    <>
      <SheetTabs>
        <SheetTab href="#source" $w={97} $start><DatabaseIcon w={7} h={9} />Data Source</SheetTab>
        <SheetTab href="#countries" $w={124}>Sales in different countries</SheetTab>
        <SheetTab href="#drinks" $w={113}>Drinks sales in countries</SheetTab>
        <SheetTab href="#trends" $w={46} $active>TRENDS</SheetTab>
        <SheetTab href="#dash" $w={77}><Line w={9}><path d="M.5.5h8v8h-8zM4.500.5v8M.5 4.500h8" /></Line>FINAL DASH</SheetTab>
        <SheetTab href="#new-sheet" aria-label="New worksheet" $w={24}><Line w={11}><path d="M6 8.500H.5v-8h8V6M3 6.500V4.500M4.500 6.500V3M6 6.500V4" /><path d="M8.500 6v5M6 8.500h5" /></Line></SheetTab>
        <SheetTab href="#new-dash" aria-label="New dashboard" $w={23}><Line w={11}><path d="M6 8.500H.5v-8h8V6M4.500.5v8M.5 4.500h8" /><path d="M8.500 6v5M6 8.500h5" /></Line></SheetTab>
        <SheetTab href="#new-story" aria-label="New story" $w={24}><Line w={11}><path d="M6 8.500H.5v-8h3l1 1 1-1h3V6M4.500 1.500v7" /><path d="M8.500 6v5M6 8.500h5" /></Line></SheetTab>
      </SheetTabs>
      <StatusBar>
        <span>13 marks</span>
        <span>1 row by 5 columns</span>
        <span>SUM(Sales): 1,688,676</span>
        <StatusCells>
          <StatusCell $w={94} /><StatusCell $w={20} /><StatusCell $w={20} /><StatusCell $w={35} />
          <StatusCell $w={53}>
            {["M.5 0v5M5 0 1.500 2.500 5 5z", "M4 0 .5 2.500 4 5z", "M1 0l3.500 2.500L1 5z", "M4.500 0v5M0 0l3.500 2.500L0 5z"].map((d) => <svg key={d} width="5" height="5" viewBox="0 0 5 5"><path d={d} fill="currentColor" stroke="currentColor" strokeWidth=".5" /></svg>)}
          </StatusCell>
          <StatusCell $w={57}>
            <svg width="8" height="8" viewBox="0 0 8 8" fill="#9c9c9c"><path d="M0 0h2v2H0zM3 0h2v2H3zM6 0h2v2H6zM0 3h2v2H0zM3 3h2v2H3zM6 3h2v2H6zM0 6h2v2H0zM3 6h2v2H3zM6 6h2v2H6z" /></svg>
            <svg width="9" height="8" viewBox="0 0 9 8" fill="#a8a8a8"><path d="M0 0h9v5H0zM0 6h2v2H0zM3.500 6h2v2h-2zM7 6h2v2H7z" /></svg>
            <svg width="8" height="8" viewBox="0 0 8 8"><path d="M0 0h8v8H0z" fill="#555" /></svg>
          </StatusCell>
        </StatusCells>
      </StatusBar>
    </>
  );
}

export default function App() {
  return (
    <>
      <GlobalStyle />
      <Desktop>
        <SystemMenu />
        <Window>
          <TitleBar>
            <Lights>
              <Light $c="#fc5b57" aria-label="Close" /><Light $c="#fdb72b" aria-label="Minimise" /><Light $c="#27c53f" aria-label="Zoom" />
            </Lights>
            <WindowTitle>Tableau - Book1 - Tableau license expires in 14 days</WindowTitle>
          </TitleBar>
          <MainToolbar />
          <Body><DataPanel /><Cards /><SheetArea /></Body>
          <BottomBars />
        </Window>
        <DockArea>
          <DockBar>
            {DOCK.map((item, i) => item
              ? <DockItem key={item.name} aria-label={item.name} $running={item.running}>{item.art}</DockItem>
              : <DockRule key={i} />)}
          </DockBar>
        </DockArea>
      </Desktop>
    </>
  );
}
